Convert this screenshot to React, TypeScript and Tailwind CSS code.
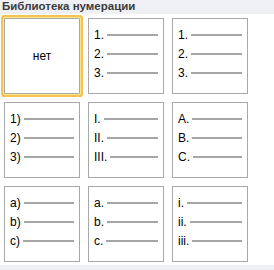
import React from "react";

type Tile = { none?: boolean; items?: string[]; selected?: boolean };

const tiles: Tile[] = [
  { none: true, selected: true },
  { items: ["1.", "2.", "3."] },
  { items: ["1.", "2.", "3."] },
  { items: ["1)", "2)", "3)"] },
  { items: ["I.", "II.", "III."] },
  { items: ["A.", "B.", "C."] },
  { items: ["a)", "b)", "c)"] },
  { items: ["a.", "b.", "c."] },
  { items: ["i.", "ii.", "iii."] },
];

function TileView({ t }: { t: Tile }) {
  const base =
    "w-[76px] h-[76px] bg-white border border-[#a9a9a9] box-border";
  const sel = t.selected
    ? " shadow-[0_0_0_1px_#fde48f,0_0_0_3px_#f3c452] rounded-[1px]"
    : "";
  if (t.none) {
    return (
      <div className={base + sel + " flex items-center justify-center"}>
        <span className="text-[12px] text-black leading-none">нет</span>
      </div>
    );
  }
  return (
    <div className={base + sel + " flex flex-col pt-[6px] pl-[5px] pr-[5px]"}>
      {t.items!.map((s) => (
        <div key={s} className="h-[19px] flex items-center">
          <span className="text-[12px] leading-none text-black">{s}</span>
          <div className="flex-1 h-[2px] bg-[#a6a6a6] ml-[3px]" />
        </div>
      ))}
    </div>
  );
}

export default function App() {
  return (
    <div
      className="w-[274px] h-[270px] bg-white flex flex-col"
      style={{ fontFamily: '"Liberation Sans", Arial, sans-serif' }}
    >
      <div className="h-[14px] bg-[#eef0f4] flex items-center pl-[2px]">
        <span className="text-[11.5px] font-bold text-[#3b3b3b] leading-none">
          Библиотека нумерации
        </span>
      </div>
      <div className="flex-1 pt-[4px] pl-[4px]">
        <div className="grid grid-cols-[76px_76px_76px] gap-[8px]">
          {tiles.map((t, i) => (
            <TileView key={i} t={t} />
          ))}
        </div>
      </div>
      <div className="h-[5px] bg-[#eef0f4]" />
    </div>
  );
}
